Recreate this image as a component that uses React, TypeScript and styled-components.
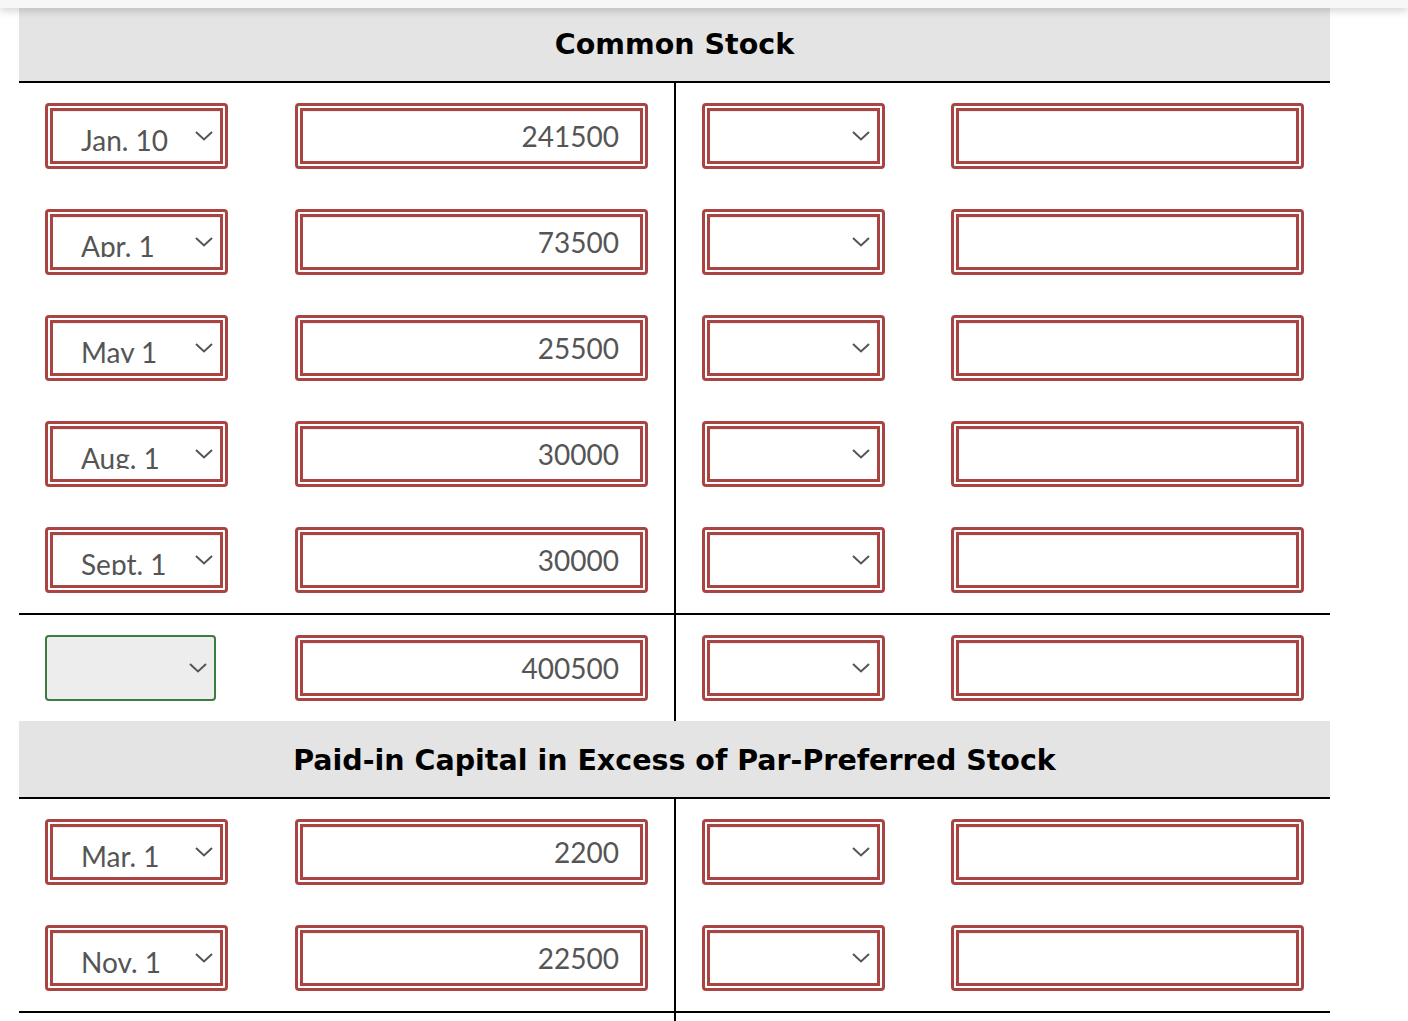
import styled, { createGlobalStyle } from 'styled-components';

const GlobalStyle = createGlobalStyle`
  *, *::before, *::after {
    box-sizing: border-box;
  }

  body {
    margin: 0;
    background: #fff;
    font-family: Lato, 'Open Sans', sans-serif;
  }
`;

const TopBar = styled.div`
  position: fixed;
  top: 0;
  left: 0;
  right: 0;
  height: 8px;
  background: #f7f7f7;
  box-shadow: 0 2px 10px rgba(0, 0, 0, 0.22);
  z-index: 2;
`;

const Page = styled.div`
  width: 1311px;
  margin-left: 19px;
  padding-top: 5px;
`;

const SectionHeader = styled.h2`
  margin: 0;
  height: 78px;
  padding-top: 3px;
  display: flex;
  align-items: center;
  justify-content: center;
  background: #e4e4e4;
  border-bottom: 2px solid #000;
  font-family: 'DejaVu Sans', Verdana, sans-serif;
  font-weight: bold;
  font-size: 28.5px;
  color: #000;
`;

const Group = styled.div`
  border-bottom: 2px solid #000;
`;

const Row = styled.div`
  display: flex;
`;

const Half = styled.div<{ $left?: boolean }>`
  width: ${(p) => (p.$left ? '657px' : '654px')};
  border-right: ${(p) => (p.$left ? '2px solid #000' : '0')};
  padding: 20px 0 20px 26px;
  display: flex;
  gap: ${(p) => (p.$left ? '67px' : '66px')};
`;

const Frame = styled.div<{ $w: number }>`
  width: ${(p) => p.$w}px;
  height: 66px;
  padding: 2px;
  border: 3px solid #a94442;
  border-radius: 4px;
  background: #fff;
`;

const SelectInner = styled.div`
  height: 100%;
  display: flex;
  align-items: center;
  justify-content: space-between;
  padding: 0 7px 0 28px;
  border: 3px solid #a94442;
  box-shadow: inset 0 1px 1px rgba(0, 0, 0, 0.075);
`;

const SelectValue = styled.span`
  align-self: flex-start;
  margin-top: 15px;
  height: 25px;
  overflow: hidden;
  font-size: 28px;
  line-height: 28px;
  color: #555;
  white-space: nowrap;
`;

const AmountInput = styled.input`
  width: 100%;
  height: 100%;
  margin: 0;
  padding: 0 21px 0 0;
  border: 3px solid #a94442;
  border-radius: 0;
  box-shadow: inset 0 1px 1px rgba(0, 0, 0, 0.075);
  font-family: inherit;
  font-size: 28px;
  color: #555;
  text-align: right;
  outline: none;
  background: #fff;
`;

const BlankSelect = styled.div`
  width: 171px;
  height: 66px;
  margin-right: 12px;
  display: flex;
  align-items: center;
  justify-content: flex-end;
  padding-right: 7px;
  border: 2px solid #3e7b3e;
  border-radius: 4px;
  background: #ededed;
`;

const Chevron = () => (
  <svg width="18" height="10" viewBox="0 0 18 10">
    <polyline points="1,1 9,8.5 17,1" fill="none" stroke="#555" strokeWidth="2" />
  </svg>
);

function DateSelect({ value }: { value?: string }) {
  return (
    <Frame $w={183}>
      <SelectInner>
        <SelectValue>{value ?? ''}</SelectValue>
        <Chevron />
      </SelectInner>
    </Frame>
  );
}

function Amount({ value }: { value?: string }) {
  return (
    <Frame $w={353}>
      <AmountInput readOnly value={value ?? ''} />
    </Frame>
  );
}

function EntryRow({ date, amount, total }: { date?: string; amount: string; total?: boolean }) {
  return (
    <Row>
      <Half $left>
        {total ? (
          <BlankSelect>
            <Chevron />
          </BlankSelect>
        ) : (
          <DateSelect value={date} />
        )}
        <Amount value={amount} />
      </Half>
      <Half>
        <DateSelect />
        <Amount />
      </Half>
    </Row>
  );
}

const ledgers = [
  {
    title: 'Common Stock',
    entries: [
      ['Jan. 10', '241500'],
      ['Apr. 1', '73500'],
      ['May 1', '25500'],
      ['Aug. 1', '30000'],
      ['Sept. 1', '30000'],
    ],
    total: '400500',
  },
  {
    title: 'Paid-in Capital in Excess of Par-Preferred Stock',
    entries: [
      ['Mar. 1', '2200'],
      ['Nov. 1', '22500'],
    ],
    total: '24700',
  },
];

export default function App() {
  return (
    <>
      <GlobalStyle />
      <TopBar />
      <Page>
        {ledgers.map((l) => (
          <section key={l.title}>
            <SectionHeader>{l.title}</SectionHeader>
            <Group>
              {l.entries.map(([d, a]) => (
                <EntryRow key={d} date={d} amount={a} />
              ))}
            </Group>
            <EntryRow total amount={l.total} />
          </section>
        ))}
      </Page>
    </>
  );
}
